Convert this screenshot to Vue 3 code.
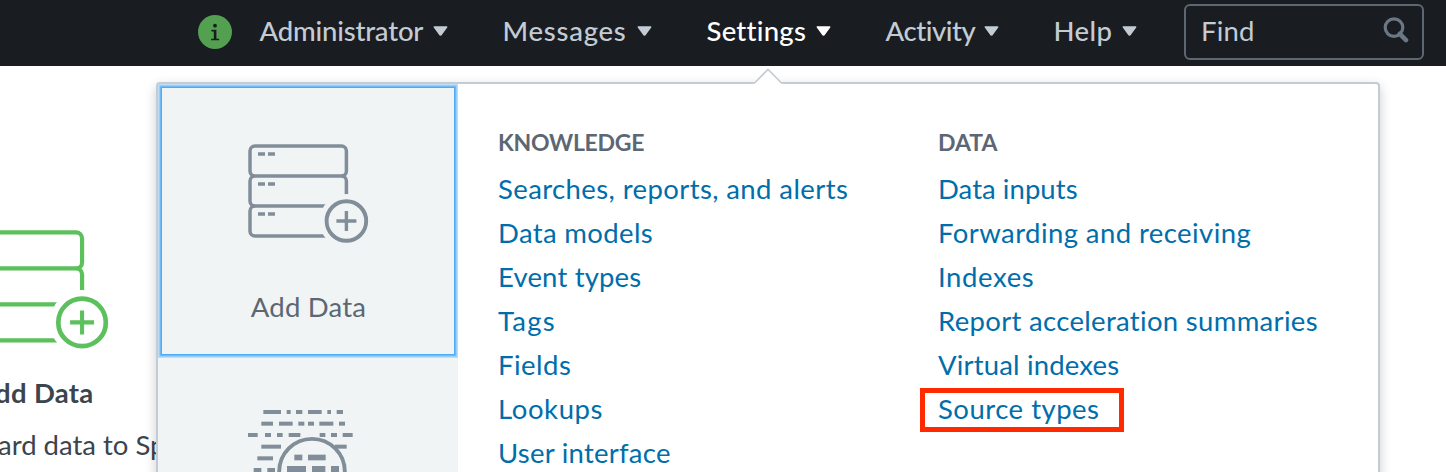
<script setup>
const nav = [
  { label: 'Administrator', width: 188, track: -0.2 },
  { label: 'Messages', width: 149, track: 0.75 },
  { label: 'Settings', width: 124, track: 0.25 },
  { label: 'Activity', width: 113, track: -0.45 },
  { label: 'Help', width: 83, track: 0.4 },
]

const columns = [
  {
    title: 'KNOWLEDGE',
    track: -0.25,
    links: [
      { label: 'Searches, reports, and alerts', track: 0.4 },
      { label: 'Data models', track: 0.35 },
      { label: 'Event types', track: 0.17 },
      { label: 'Tags', track: 1.2 },
      { label: 'Fields', track: 0.5 },
      { label: 'Lookups', track: 0.6 },
      { label: 'User interface', track: 0.25 },
    ],
  },
  {
    title: 'DATA',
    track: 0,
    links: [
      { label: 'Data inputs', track: 0.05 },
      { label: 'Forwarding and receiving', track: 0.42 },
      { label: 'Indexes', track: 0.6 },
      { label: 'Report acceleration summaries', track: 0.32 },
      { label: 'Virtual indexes', track: 0.17 },
      { label: 'Source types', track: 0.5, marked: true },
    ],
  },
]

// Dash rows of the console icon: y, height, then [start, end] pairs
const dashes = [
  { y: 195, h: 12, runs: [[340, 393], [410, 422], [438, 457], [474, 515], [532, 543], [560, 579]] },
  { y: 230, h: 12, runs: [[334, 369], [387, 428], [445, 463], [474, 492], [508, 550], [567, 585]] },
  { y: 264, h: 12, runs: [[294, 323], [345, 363], [381, 398], [416, 451], [509, 526], [543, 561], [578, 608]] },
  { y: 299, h: 12, runs: [[334, 393], [555, 590]] },
  { y: 334, h: 12, runs: [[322, 369]] },
  { y: 369, h: 12, runs: [[311, 334], [352, 375]] },
  { y: 329, h: 17, runs: [[433, 457], [474, 527]] },
  { y: 363, h: 18, runs: [[411, 468], [486, 526], [543, 567]] },
]

const active = 'Settings'
const spacing = (n) => ({ letterSpacing: n + 'px' })
</script>

<template>
  <div class="page">
    <svg class="defs" width="0" height="0">
      <symbol id="servers" viewBox="0 0 122 100">
        <g fill="none" stroke="currentColor" stroke-width="3.5">
          <rect x="2" y="2" width="96.4" height="30" rx="5" />
          <path d="M7 32a5 5 0 0 0-5 5v20a5 5 0 0 0 5 5h80M93.4 32a5 5 0 0 1 5 5v20" />
          <path d="M7 62a5 5 0 0 0-5 5v20a5 5 0 0 0 5 5h80" />
        </g>
        <path d="M10 10h7M20 10h7M10 40h7M20 40h7M10 70h7M20 70h7" stroke="currentColor" stroke-width="3.6" />
        <circle class="gap" cx="98.4" cy="77" r="27" />
        <circle cx="98.4" cy="77" r="19.8" fill="none" stroke="currentColor" stroke-width="3.9" />
        <path d="M88.4 77h20M98.4 67v20" stroke="currentColor" stroke-width="3.4" />
      </symbol>
    </svg>

    <header class="bar">
      <svg class="info" viewBox="0 0 34 34">
        <circle cx="17" cy="17" r="17" fill="#53a051" />
        <g fill="#191d21">
          <circle cx="17" cy="10.7" r="1.9" />
          <path d="M13.4 14.8h5v9h2.7v1.4h-8v-1.4h2.7v-7.4h-2.4z" />
        </g>
      </svg>
      <nav class="nav">
        <a v-for="n in nav" :key="n.label" class="item" :class="{ active: n.label === active }" :style="{ width: n.width + 'px' }">
          <span :style="spacing(n.track)">{{ n.label }}</span>
          <svg class="caret" viewBox="0 0 15 10"><path d="M1.4 1h12.2L8.3 8.4q-.8 1-1.6 0z" fill="currentColor" stroke="currentColor" stroke-width="1.6" stroke-linejoin="round" /></svg>
        </a>
      </nav>
      <div class="find">
        <span>Find</span>
        <svg class="glass" viewBox="0 0 26 26">
          <path d="M16.8 16.8l6.2 6.3" stroke="currentColor" stroke-width="4.6" stroke-linecap="round" />
          <circle cx="11" cy="10.6" r="8.8" fill="none" stroke="currentColor" stroke-width="3.2" />
        </svg>
      </div>
    </header>

    <main class="home">
      <svg class="big"><use href="#servers" /></svg>
      <h3>Add Data</h3>
      <p>ard data to Sp</p>
    </main>

    <section class="menu">
      <svg class="notch" viewBox="0 0 30 17">
        <path d="M0 17L1 15.3 15 1.3 29 15.3 30 17z" fill="#fff" />
        <path d="M1 15.5L15 1.5 29 15.5" fill="none" stroke="#c3cbd4" stroke-width="1.6" />
      </svg>
      <aside class="tiles">
        <a class="tile focused">
          <svg class="servers"><use href="#servers" /></svg>
          <span>Add Data</span>
        </a>
        <a class="tile">
          <svg class="console" viewBox="294 192 324 192">
            <template v-for="(d, i) in dashes" :key="i">
              <rect v-for="r in d.runs" :key="r[0]" :x="r[0]" :y="d.y" :width="r[1] - r[0]" :height="d.h" fill="currentColor" />
            </template>
            <circle cx="486" cy="380" r="98.5" fill="none" stroke="currentColor" stroke-width="11.5" />
          </svg>
        </a>
      </aside>
      <div class="columns">
        <div v-for="c in columns" :key="c.title" class="column">
          <h4 :style="spacing(c.track)">{{ c.title }}</h4>
          <a v-for="l in c.links" :key="l.label" :class="{ marked: l.marked }" :style="spacing(l.track)">{{ l.label }}</a>
        </div>
      </div>
    </section>
  </div>
</template>

<style>
body {
  margin: 0;
  background: #fff;
}
</style>

<style scoped>
.page {
  position: relative;
  height: 472px;
  overflow: hidden;
  font: 27.5px/44px Lato, "Liberation Sans", sans-serif;
}
.defs {
  position: absolute;
}
.gap {
  fill: var(--gap);
}
.bar {
  box-sizing: border-box;
  display: flex;
  align-items: flex-start;
  height: 66px;
  padding: 0 22px 0 198px;
  background: #191d21;
  color: #c3cbd4;
}
.info {
  width: 34px;
  height: 34px;
  margin: 15px 28px 0 0;
}
.nav {
  display: flex;
  gap: 55px;
  height: 61px;
  font-weight: 500;
}
.item {
  display: flex;
  align-items: center;
  justify-content: space-between;
  white-space: nowrap;
}
.item span {
  margin-left: -0.5px;
}
.item.active {
  color: #fff;
}
.caret {
  width: 15px;
  height: 10px;
  flex: none;
}
.find {
  box-sizing: border-box;
  display: flex;
  align-items: center;
  justify-content: space-between;
  width: 240px;
  height: 56px;
  margin: 4px 0 0 auto;
  padding: 0 13px 3px 15px;
  border: 2px solid #5c6773;
  border-radius: 6px;
  letter-spacing: 0.2px;
}
.glass {
  width: 26px;
  height: 26px;
  margin-top: -2px;
  color: #6b7785;
}
.home {
  color: #3c444d;
  white-space: nowrap;
  padding-top: 164px;
}
.big {
  display: block;
  width: 146.4px;
  height: 120px;
  margin-left: -36px;
  color: #5cc05c;
  --gap: #fff;
}
.home h3 {
  margin: 21px 0 0 -24px;
  font-size: 27.5px;
  font-weight: 700;
  letter-spacing: 0.3px;
}
.home p {
  margin: 8px 0 0 -2px;
  letter-spacing: 0;
}
.menu {
  position: absolute;
  left: 156px;
  top: 82px;
  box-sizing: border-box;
  display: flex;
  width: 1224px;
  height: 480px;
  border: 2px solid #c3cbd4;
  border-radius: 4px;
  background: #fff;
  box-shadow: 0 4px 12px rgba(0, 0, 0, 0.2);
}
.notch {
  position: absolute;
  left: 595px;
  top: -16px;
  width: 30px;
  height: 17px;
}
.tiles {
  width: 300px;
  background: #f0f4f5;
  color: #818d99;
  --gap: #f0f4f5;
}
.tile {
  box-sizing: border-box;
  display: flex;
  flex-direction: column;
  align-items: center;
  height: 274px;
  padding-top: 60px;
}
.tile + .tile {
  padding-top: 51px;
}
.tile.focused {
  box-shadow: inset 0 0 0 1px #c0dcf2, inset 0 0 0 2px #9bcff8, inset 0 0 0 3px #6fbbf8, inset 0 0 0 4px #4dabf8;
}
.tile span {
  margin: 41px 0 0 1px;
  color: #5c6773;
  letter-spacing: 0.2px;
}
.servers {
  width: 122px;
  height: 100px;
  margin-left: 2px;
}
.console {
  width: 108px;
  height: 64px;
  margin-right: 12px;
}
.columns {
  display: flex;
  padding: 33px 0 0 39px;
}
.column {
  display: flex;
  flex-direction: column;
  align-items: flex-start;
  width: 440px;
  white-space: nowrap;
  color: #006eaa;
}
.column h4 {
  margin: 0;
  padding-left: 1px;
  font-size: 23px;
  line-height: 50px;
  font-weight: 700;
  color: #5c6773;
}
.column a {
  position: relative;
  padding-left: 1px;
}
.marked::after {
  content: "";
  position: absolute;
  box-sizing: border-box;
  left: -17px;
  top: 1px;
  width: 204px;
  height: 44px;
  border: 5px solid #ff2a00;
}
</style>
